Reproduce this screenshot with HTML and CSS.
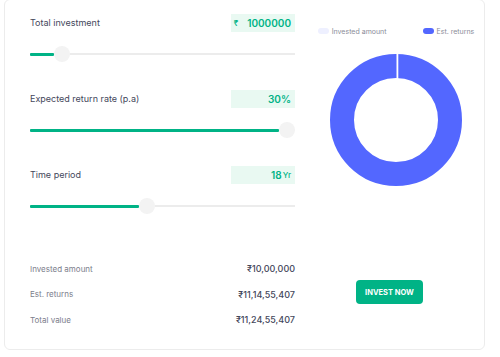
FILE: index.html
```html
<!DOCTYPE html>
<html>
<head>
<meta charset="utf-8">
<link rel="stylesheet" href="styles.css">
</head>
<body>
<div class="card">
  <div class="left">
    <div class="group">
      <div class="head">
        <span class="label">Total investment</span>
        <span class="box"><span class="cur">₹</span>1000000</span>
      </div>
      <div class="slider">
        <div class="fill" style="width:24px"></div>
        <div class="thumb" style="left:24px"></div>
      </div>
    </div>
    <div class="group">
      <div class="head">
        <span class="label">Expected return rate (p.a)</span>
        <span class="box">30%</span>
      </div>
      <div class="slider">
        <div class="fill" style="width:249px"></div>
        <div class="thumb" style="left:249px"></div>
      </div>
    </div>
    <div class="group">
      <div class="head">
        <span class="label">Time period</span>
        <span class="box">18<span class="unit">Yr</span></span>
      </div>
      <div class="slider">
        <div class="fill" style="width:109px"></div>
        <div class="thumb" style="left:109px"></div>
      </div>
    </div>
    <div class="summary">
      <div class="row"><span class="slabel">Invested amount</span><span class="sval">₹10,00,000</span></div>
      <div class="row"><span class="slabel">Est. returns</span><span class="sval">₹11,14,55,407</span></div>
      <div class="row"><span class="slabel">Total value</span><span class="sval">₹11,24,55,407</span></div>
    </div>
  </div>
  <div class="right">
    <div class="chart">
      <div class="legend">
        <span class="item"><span class="sw sw-inv"></span>Invested amount</span>
        <span class="item"><span class="sw sw-est"></span>Est. returns</span>
      </div>
      <svg class="donut" width="132" height="132" viewBox="0 0 132 132">
        <circle cx="66" cy="66" r="54" fill="none" stroke="#5367ff" stroke-width="24"/>
        <rect x="66.5" y="0" width="1.8" height="25" fill="#ffffff"/>
      </svg>
    </div>
    <button class="btn">INVEST NOW</button>
  </div>
</div>
</body>
</html>
```
FILE: styles.css
```css
* { box-sizing: border-box; }
html, body { margin: 0; padding: 0; background: #ffffff; }
body {
  font-family: Inter, "Noto Sans", sans-serif;
  color: #44475b;
  padding: 0 0 0 4px;
}
.card {
  width: 481px;
  height: 351px;
  margin-top: -1px;
  border: 1px solid #ececec;
  border-radius: 6px;
  display: flex;
  padding: 13px 0 0 25px;
}
.left {
  width: 265px;
  display: flex;
  flex-direction: column;
}
.group { margin-bottom: 26px; }
.head {
  height: 19px;
  display: flex;
  justify-content: space-between;
  align-items: center;
}
.label {
  font-size: 9px;
  color: #44475b;
}
.box {
  width: 64px;
  height: 18px;
  background: #e9f9f2;
  color: #00b386;
  font-size: 10px;
  font-weight: 600;
  display: flex;
  align-items: center;
  justify-content: flex-end;
  padding-right: 4px;
}
.cur { font-size: 8px; margin-right: 9px; font-weight: 500; }
.unit { font-size: 8px; font-weight: 500; margin-left: 1px; }
.slider {
  position: relative;
  height: 18px;
  margin-top: 13px;
}
.slider::before {
  content: "";
  position: absolute;
  left: 0; right: 0;
  top: 8px;
  height: 2px;
  background: #ececec;
}
.fill {
  position: absolute;
  left: 0;
  top: 8px;
  height: 3px;
  background: #00b386;
  border-radius: 1px;
}
.thumb {
  position: absolute;
  top: 1px;
  width: 16px;
  height: 16px;
  border-radius: 50%;
  background: #f3f3f3;
}
.summary {
  margin-top: 15px;
  display: flex;
  flex-direction: column;
}
.row {
  height: 25.5px;
  display: flex;
  justify-content: space-between;
  align-items: center;
}
.slabel { font-size: 8px; color: #7c7e8c; }
.sval { font-size: 9px; font-weight: 500; color: #44475b; }
.right {
  width: 189px;
  display: flex;
  flex-direction: column;
  align-items: center;
}
.chart {
  padding-left: 13px;
  display: flex;
  flex-direction: column;
  align-items: center;
}
.legend {
  display: flex;
  gap: 36px;
  margin-top: 13px;
  height: 10px;
  align-items: center;
  font-size: 7px;
  color: #8a8c99;
}
.item { display: flex; align-items: center; }
.sw {
  width: 11px;
  height: 6px;
  border-radius: 3px;
  margin-right: 3px;
}
.sw-inv { background: #eef0ff; }
.sw-est { background: #5367ff; }
.donut { display: block; margin-top: 18px; }
.btn {
  margin-top: 94px;
  width: 67px;
  height: 24px;
  border: none;
  border-radius: 4px;
  background: #00b386;
  color: #ffffff;
  font-family: Inter, sans-serif;
  font-weight: 700;
  font-size: 7.5px;
  padding: 0;
}
```
